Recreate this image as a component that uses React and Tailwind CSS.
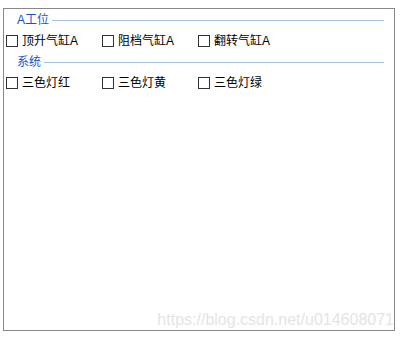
const groups = [
  { title: "A工位", items: ["顶升气缸A", "阻档气缸A", "翻转气缸A"] },
  { title: "系统", items: ["三色灯红", "三色灯黄", "三色灯绿"] },
];

const Check = ({ label }) => (
  <label className="w-[96px] flex items-center gap-[4px]">
    <span className="w-[12px] h-[12px] border border-[#333333] bg-white shrink-0" />
    <span className="text-[12px] leading-none text-black">{label}</span>
  </label>
);

const App = () => {
  return (
    <div
      className="w-[403px] h-[339px] bg-white pt-[8px] pl-[3px]"
      style={{ fontFamily: '"Liberation Sans", "Noto Sans CJK SC", sans-serif' }}
    >
      <div className="relative w-[392px] h-[323px] border border-[#888888] pt-[4px]">
        {groups.map((g, i) => (
          <div key={g.title} className={i > 0 ? "mt-[4px]" : ""}>
            {/* group title with rule */}
            <div className="h-[14px] flex items-center pl-[13px] pr-[10px] gap-[3px]">
              <span className="text-[12px] leading-none text-[#1a4fd6]">{g.title}</span>
              <div className="flex-1 h-px bg-[#a8bfe6]" />
            </div>
            <div className="h-[20px] mt-[4px] flex items-center pl-[2px]">
              {g.items.map((it) => (
                <Check key={it} label={it} />
              ))}
            </div>
          </div>
        ))}

        {/* watermark */}
        <div className="absolute right-[0px] bottom-[2px] text-[16px] leading-none text-[#e4e4e4]">
          https://blog.csdn.net/u014608071
        </div>
      </div>
    </div>
  );
};

export default App;
